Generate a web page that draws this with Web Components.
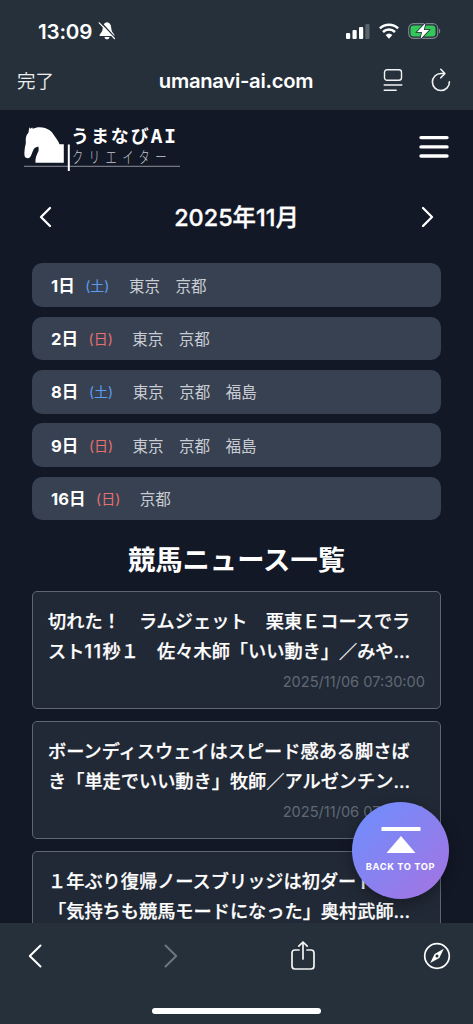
<!DOCTYPE html>
<html lang="ja">
<head>
<meta charset="utf-8">
<title>うまなびAI クリエイター</title>
<style>
html,body{margin:0;height:100%;background:#121826}
body{font-family:Inter,"Noto Sans CJK JP",sans-serif;color:#fff;overflow:hidden;text-spacing-trim:space-all}
.num{letter-spacing:1.500px}
</style>
</head>
<body>
<phone-screen>
  <browser-bar slot="top"></browser-bar>
  <site-header></site-header>
  <month-nav>2025年11月</month-nav>
  <race-list>
    <race-day day="1日" week="土">東京　京都</race-day>
    <race-day day="2日" week="日">東京　京都</race-day>
    <race-day day="8日" week="土">東京　京都　福島</race-day>
    <race-day day="9日" week="日">東京　京都　福島</race-day>
    <race-day day="16日" week="日">京都</race-day>
  </race-list>
  <news-list heading="競馬ニュース一覧">
    <news-card time="2025/11/06 07:30:00">切れた！　ラムジェット　栗東Ｅコースでラ<br>スト<span class="num">11</span>秒１　佐々木師「いい動き」／みや…</news-card>
    <news-card time="2025/11/06 07:30:00">ボーンディスウェイはスピード感ある脚さば<br>き「単走でいい動き」牧師／アルゼンチン…</news-card>
    <news-card time="">１年ぶり復帰ノースブリッジは初ダート<br>「気持ちも競馬モードになった」奥村武師…</news-card>
  </news-list>
  <back-to-top slot="float">BACK TO TOP</back-to-top>
  <tool-bar slot="bottom"></tool-bar>
</phone-screen>
<script>
const define = (name, html) => customElements.define(name, class extends HTMLElement {
  connectedCallback() {
    if (this.shadowRoot) return;
    this.attachShadow({mode: 'open'}).innerHTML =
      '<style>:host,*{box-sizing:border-box}svg{display:block;flex:none}</style>' +
      (typeof html === 'function' ? html(this) : html);
  }
});

define('phone-screen', `
<style>
:host{display:flex;flex-direction:column;position:relative;width:473px;height:1024px;overflow:hidden;background:#121826}
main{flex:1;min-height:0;overflow:hidden}
</style>
<slot name="top"></slot><main><slot></slot></main><slot name="bottom"></slot><slot name="float"></slot>`);

define('browser-bar', `
<style>
:host{display:block;height:110px;flex:none;background:#25303b}
.status{display:flex;align-items:center;height:62px;padding:0 32px 0 38px}
.time{font-size:20.600px;font-weight:600;letter-spacing:-.2px;width:55px;white-space:nowrap}
.bell{margin-left:5px}
.sig{margin-left:auto}
.wifi{margin-left:9px}.bat{margin-left:9px}
.url{display:grid;grid-template-columns:120px 1fr 120px;align-items:center;height:36px;padding:0 22px 0 17px}
.done{font-size:18.500px;font-weight:350;color:#eee}
.host{font-size:20.300px;font-weight:600;text-align:center;letter-spacing:-.3px;white-space:nowrap;padding-left:4px}
.acts{display:flex;justify-content:flex-end;gap:28px}
</style>
<div class="status">
  <span class="time">13:09</span>
  <svg class="bell" width="18" height="20" viewBox="0 0 18 20"><path d="M9 1.200C6.700 1.200 5 3.400 4.800 6.400 4.600 10 3.700 11 2 13.200c-.9 1.100-.4 1.800.6 1.800h12.800c1 0 1.500-.7.6-1.800-1.700-2.200-2.600-3.200-2.800-6.800C13 3.400 11.300 1.200 9 1.200zM6.500 16h5c-.2 1.500-1.200 2.300-2.500 2.300S6.700 17.500 6.500 16z" fill="#fff"/><path d="M2.300.8 17 16.800" stroke="#25303b" stroke-width="1.600"/><path d="m1.200 1.800 15.300 15.700" stroke="#fff" stroke-width="1.200" stroke-linecap="round"/></svg>
  <svg class="sig" width="24" height="16" viewBox="0 0 24 16"><g fill="#fff"><rect y="10" width="4.200" height="6" rx="1"/><rect x="6.500" y="7" width="4.200" height="9" rx="1"/><rect x="13" y="4" width="4.200" height="12" rx="1"/></g><rect x="19.300" y="1" width="4.200" height="15" rx="1" fill="#5a626c"/></svg>
  <svg class="wifi" width="20" height="16" viewBox="0 0 20 16"><g fill="none" stroke="#fff" stroke-width="2.500"><path d="M.9 5.400a13.200 13.200 0 0 1 18.200 0"/><path d="M4 9a8.700 8.700 0 0 1 12 0"/></g><path d="M6.600 12a5 5 0 0 1 6.800 0L10 15.700z" fill="#fff"/></svg>
  <svg class="bat" width="33" height="18" viewBox="0 0 33 18"><rect x=".7" y="1.700" width="29" height="14.600" rx="4.700" fill="none" stroke="#7b838b" stroke-width="1.200"/><rect x="2.500" y="3.500" width="25" height="11" rx="3" fill="#34c759"/><path d="M31 6.500c1.600.5 1.600 4.500 0 5z" fill="#7b838b"/><path d="M17.500 1 9 10h5l-1.500 7L21 8h-5.200z" fill="#fff" stroke="#25303b" stroke-width="1.600" paint-order="stroke"/></svg>
</div>
<div class="url">
  <span class="done">完了</span><span class="host">umanavi-ai.com</span>
  <span class="acts">
    <svg width="20" height="24" viewBox="0 0 20 24" fill="none" stroke="#f2f2f2" stroke-width="1.400" stroke-linecap="round"><rect x="1.500" y="1.700" width="17" height="10.500" rx="2.500"/><path d="M1.200 17h17.600M1.200 22.200h12"/></svg>
    <svg width="20" height="24" viewBox="0 0 20 24" fill="none" stroke="#f2f2f2" stroke-width="1.600" stroke-linecap="round" stroke-linejoin="round"><path d="M18.400 13.700A8.500 8.500 0 1 1 10 5.500h3M9.800 1.300l4.100 4.200-4.100 4.300"/></svg>
  </span>
</div>`);

define('site-header', `
<style>
:host{display:flex;justify-content:space-between;align-items:flex-start;height:74px;padding:13px 24px 0 24px}
.logo{position:relative;width:158px;height:50px}
.logo>svg{position:absolute;left:0;top:0}
.a,.b{position:absolute;white-space:nowrap;line-height:20px}
.a{left:47px;top:2px;font:700 18px/20px "Noto Sans CJK JP",sans-serif;letter-spacing:1.900px}
.a i{font:700 20px/20px "DejaVu Sans Mono",monospace;letter-spacing:1.300px}
.b{left:48px;top:23px;font:300 16px/20px "Noto Sans CJK JP",sans-serif;letter-spacing:7.900px;color:#c6cad0;transform:scaleX(.7);transform-origin:left}
.menu{margin-top:12px}
</style>
<div class="logo">
<svg width="158" height="50" viewBox="24 123 158 50"><path d="M29.300 127l.8 1.700 2.200-1.200.4 1.300C36 127 41 126.700 45 128c5 1.600 7.500 4.500 9.500 8 1.500 2.400 4 5 5 8.300h4.300v18.400H35.500c-.5-4 1-7.700 3-11.700.3-1.500.3-3-.2-4.400-2 .6-3.800 1.200-4.600 2.600-1.500 2.700-2.200 6.500-4 8.400-1.300 1.200-4.200.6-4.900-1-.7-1.700-.4-5 .1-9 .4-2.200 1-3.500.9-5.500-.2-5.600.7-7.100 2.700-9.600z" fill="#fff"/><path d="M24 166.300h156" stroke="#8a8f99"/><path d="M68.800 144.500v26.500" stroke="#fff" stroke-width="2"/></svg>
<span class="a">うまなび<i>AI</i></span><span class="b">クリエイター</span>
</div>
<svg class="menu" width="30" height="24" viewBox="0 0 30 24"><path d="M2 2.600h26M2 11.900h26M2 21h26" stroke="#fff" stroke-width="3.400" stroke-linecap="round"/></svg>`);

define('month-nav', `
<style>
:host{display:flex;justify-content:space-between;align-items:center;height:66px;padding:0 39px;font-size:23.400px;font-weight:550}
span{white-space:nowrap;padding-bottom:2px;-webkit-text-stroke:.35px #fff}
</style>
<svg width="14" height="22" viewBox="0 0 14 22" fill="none" stroke="#fff" stroke-width="2.300" stroke-linecap="round" stroke-linejoin="round"><path d="m11 2-9 9 9 9"/></svg>
<span><slot></slot></span>
<svg width="14" height="22" viewBox="0 0 14 22" fill="none" stroke="#fff" stroke-width="2.300" stroke-linecap="round" stroke-linejoin="round"><path d="m3 2 9 9-9 9"/></svg>`);

define('race-list', `
<style>:host{display:flex;flex-direction:column;gap:9.900px;padding:13.300px 32px 0}</style><slot></slot>`);

define('race-day', el => `
<style>
:host{display:flex;align-items:center;height:43.500px;border-radius:10px;background:#374151;padding:0 19px 1px;white-space:nowrap}
b{font-size:16.600px;font-weight:650}
.w{font-size:14px;margin-left:10.500px;color:${el.getAttribute('week') === '土' ? '#5b9df0' : '#e87070'}}
.p{font-size:15.500px;color:#c9cdd3;margin-left:19.500px}
</style>
<b>${el.getAttribute('day')}</b><span class="w">(${el.getAttribute('week')})</span><span class="p"><slot></slot></span>`);

define('news-list', el => `
<style>
:host{display:block;padding:0 32px}
h2{margin:0;height:70.500px;display:flex;align-items:center;justify-content:center;padding-top:5px;font-size:27.300px;font-weight:700;white-space:nowrap}
div{display:flex;flex-direction:column;gap:12px}
</style>
<h2>${el.getAttribute('heading')}</h2><div><slot></slot></div>`);

define('news-card', el => `
<style>
:host{display:flex;flex-direction:column;height:118px;flex:none;border:1px solid #5d6673;border-radius:5px;background:#212936;padding:15.500px 15px 0}
p{margin:0;font-size:18.200px;line-height:29.300px;font-weight:550;white-space:nowrap;-webkit-text-stroke:.25px #fff}
time{align-self:flex-end;font-size:14.600px;line-height:20px;margin-top:6.500px;color:#606874}
</style>
<p><slot></slot></p><time>${el.getAttribute('time')}</time>`);

define('back-to-top', `
<style>
:host{position:absolute;left:352px;top:802px;width:97px;height:97px;border-radius:50%;background:linear-gradient(135deg,#6c8fff,#a573e0);box-shadow:0 4px 14px rgba(0,0,0,.35);display:flex;flex-direction:column;align-items:center;padding-top:25px;gap:7px}
span{font-size:9.300px;line-height:12px;font-weight:700;letter-spacing:.6px;white-space:nowrap}
</style>
<svg width="40" height="27" viewBox="0 0 40 27" fill="#fff"><path d="M.5 0h39v4H.5zM20 9l14.500 17h-29z"/></svg>
<span><slot></slot></span>`);

define('tool-bar', `
<style>
:host{display:flex;flex-direction:column;height:101px;flex:none;background:#25303b}
.row{display:flex;height:85px;padding:18px 22px 0 28px}
.fwd{margin-left:122px}.share{margin-left:113px}.compass{margin-left:auto}
.home{width:169px;height:6px;border-radius:3px;background:#fff;margin:0 auto}
</style>
<div class="row">
<svg width="14" height="30" viewBox="0 0 14 30" fill="none" stroke="#fff" stroke-width="2" stroke-linecap="round" stroke-linejoin="round"><path d="M12.500 4.500 1.800 15l10.700 10.500"/></svg>
<svg class="fwd" width="14" height="30" viewBox="0 0 14 30" fill="none" stroke="#6e7680" stroke-width="2" stroke-linecap="round" stroke-linejoin="round"><path d="M1.500 4.500 12.200 15 1.500 25.500"/></svg>
<svg class="share" width="24" height="30" viewBox="0 0 24 30" fill="none" stroke="#f4f4f4" stroke-width="1.700" stroke-linecap="round" stroke-linejoin="round"><path d="M8 9H4Q1 9 1 12v13q0 3 3 3h16q3 0 3-3V12q0-3-3-3h-4M12 18V1.200M7.800 5.200 12 1l4.200 4.200"/></svg>
<svg class="compass" width="28" height="30" viewBox="0 0 28 30"><circle cx="14" cy="15" r="12.300" fill="none" stroke="#fff" stroke-width="1.700"/><path d="M20.800 7.800 16.300 17 7.200 22l4.400-9.100z" fill="#fff"/><circle cx="14" cy="15" r="1.500" fill="#25303b"/></svg>
</div><div class="home"></div>`);
</script>
</body>
</html>
